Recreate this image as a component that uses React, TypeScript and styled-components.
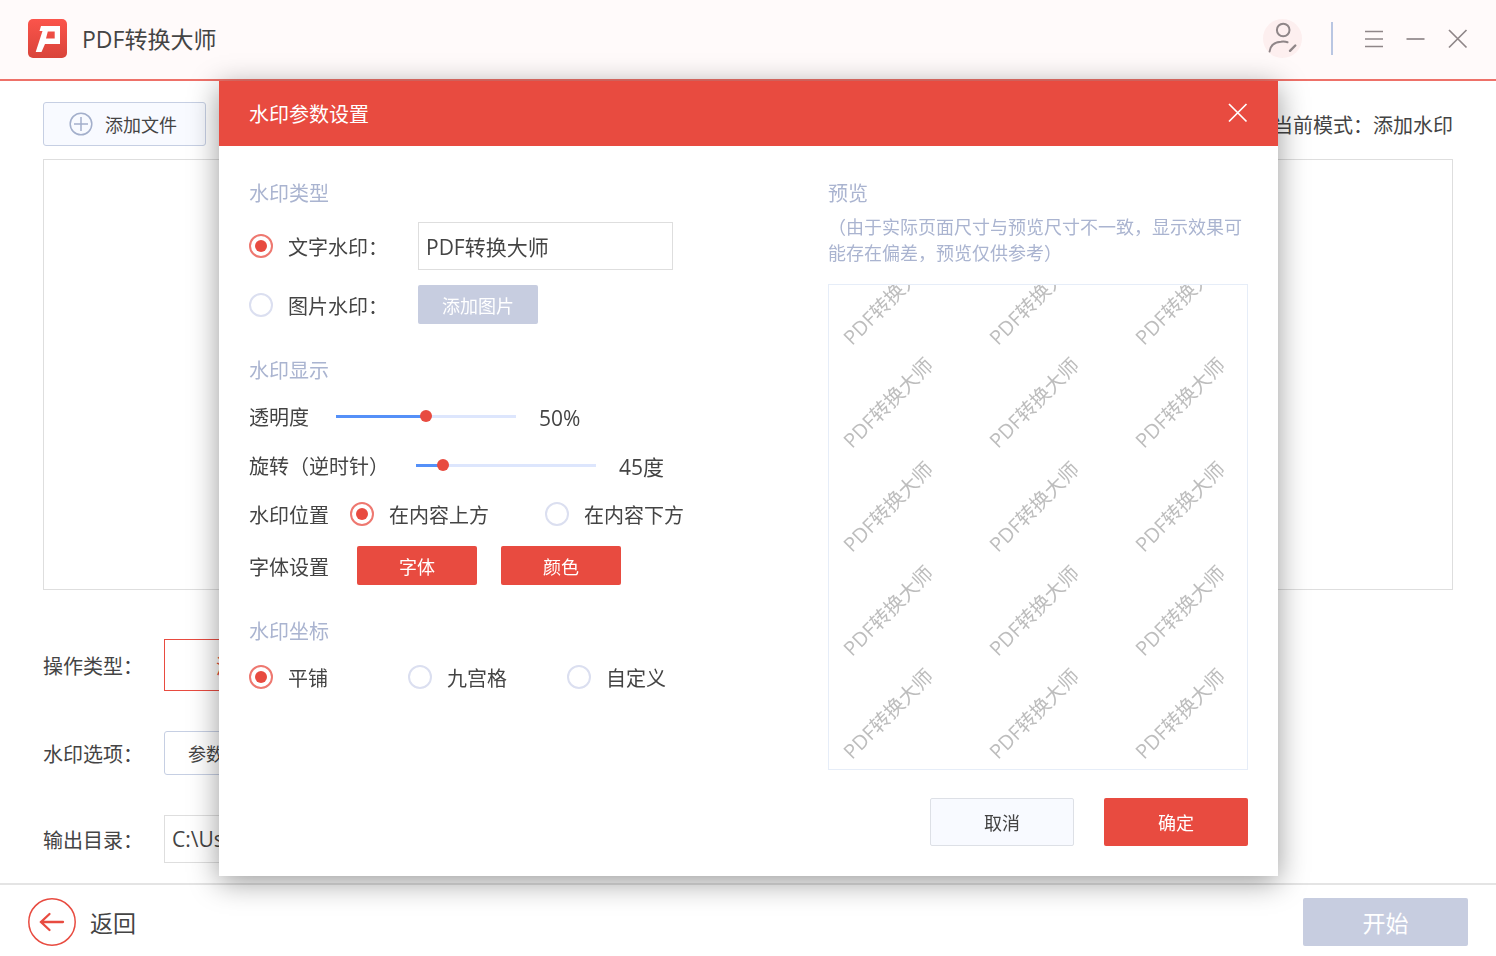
import React, { useState } from 'react';
import styled, { createGlobalStyle, css } from 'styled-components';

const red = '#e84b40';
const muted = '#aab4d0';

const GlobalStyle = createGlobalStyle`
  *, *::before, *::after { box-sizing: border-box; }
  body { margin: 0; background: #fff; }
  body, button, input {
    font-family: 'Open Sans', 'Noto Sans CJK SC', sans-serif;
    color: #444;
  }
  body { font-size: 20px; line-height: 30px; }
`;

const Page = styled.div`
  min-height: 100vh;
  display: flex;
  flex-direction: column;
`;

const TitleBar = styled.header`
  display: flex;
  align-items: center;
  justify-content: space-between;
  height: 81px;
  padding: 0 28px 2px;
  background: #fffafa;
  border-bottom: 2px solid #ee7169;
`;

const Brand = styled.div`
  display: flex;
  align-items: center;
  gap: 15px;
  font-size: 23px;
`;

const WindowControls = styled.div`
  display: flex;
  align-items: center;
`;

const IconButton = styled.button`
  display: flex;
  padding: 0;
  border: 0;
  background: none;
  cursor: pointer;
`;

const Divider = styled.span`
  width: 2px;
  height: 33px;
  margin: 0 31px 0 29px;
  background: #b9c6e2;
`;

const WindowButtons = styled.div`
  display: flex;
  gap: 22px;
`;

const Main = styled.main`
  flex: 1;
  display: flex;
  flex-direction: column;
  padding: 21px 43px 20px;
`;

const Toolbar = styled.div`
  display: flex;
  align-items: center;
  justify-content: space-between;
  margin-bottom: 13px;
`;

const OutlineButton = styled.button<{ $tinted?: boolean }>`
  display: flex;
  align-items: center;
  gap: 12px;
  height: 44px;
  padding: ${(p) => (p.$tinted ? '0 28px 0 25px' : '0 23px')};
  border: 1px solid #c6cfe3;
  border-radius: 3px;
  background: ${(p) => (p.$tinted ? '#f8faff' : '#fff')};
  font-size: 18px;
`;

const FileList = styled.section`
  flex: 1;
  min-height: 200px;
  margin-bottom: 49px;
  border: 1px solid #dedede;
`;

const OptionRows = styled.div`
  display: flex;
  flex-direction: column;
  gap: 40px;
`;

const OptionRow = styled.div`
  display: flex;
  align-items: center;
`;

const Caption = styled.span`
  padding-top: 4px;
`;

const OptionLabel = styled.label`
  width: 121px;
  padding-top: 4px;
`;

const TypeButton = styled.button`
  width: 184px;
  height: 52px;
  border: 1px solid ${red};
  background: #fff;
  color: ${red};
  font-size: 20px;
`;

const TextInput = styled.input<{ $width: number }>`
  width: ${(p) => p.$width}px;
  height: 48px;
  padding: 0 7px;
  border: 1px solid #dedede;
  background: #fff;
  font-size: 21px;
`;

const Footer = styled.footer`
  display: flex;
  align-items: center;
  justify-content: space-between;
  height: 73px;
  padding: 3px 28px 0;
  border-top: 2px solid #e4e4e4;
`;

const BackButton = styled.button`
  display: flex;
  align-items: center;
  gap: 14px;
  padding: 0;
  border: 0;
  background: none;
  font-size: 23px;
`;

type Tone = 'red' | 'grey' | 'plain';

const toneStyles = {
  red: css`
    background: ${red};
    color: #fff;
  `,
  grey: css`
    background: #c7cde0;
    color: #fff;
  `,
  plain: css`
    border: 1px solid #dde0e6;
    background: #f8faff;
  `,
};

const Button = styled.button<{ $tone: Tone; $size?: 'small' | 'medium' | 'large' }>`
  width: ${(p) => ({ small: 120, medium: 144, large: 165 })[p.$size ?? 'small']}px;
  height: ${(p) => (p.$size === 'medium' || p.$size === 'large' ? 48 : 39)}px;
  padding: 0;
  border: 0;
  border-radius: 2px;
  font-size: ${(p) => (p.$size === 'large' ? 23 : 18)}px;
  ${(p) => toneStyles[p.$tone]}
`;

const Overlay = styled.div`
  position: fixed;
  inset: 0;
  display: flex;
  align-items: center;
  justify-content: center;
  padding: 1px 0 0 1px;
`;

const Dialog = styled.div`
  width: 100%;
  max-width: 1059px;
  background: #fff;
  box-shadow: 0 6px 28px rgba(0, 0, 0, 0.4);
`;

const DialogHeader = styled.div`
  display: flex;
  align-items: center;
  justify-content: space-between;
  height: 65px;
  padding: 0 30px 2px;
  background: ${red};
  color: #fff;
`;

const DialogTitle = styled.h2`
  margin: 0;
  padding-top: 4px;
  font-size: 20px;
  font-weight: 400;
`;

const DialogBody = styled.div`
  display: flex;
  justify-content: space-between;
  padding: 33px 30px 30px;
`;

const Settings = styled.div`
  display: flex;
  flex-direction: column;
  gap: 32px;
`;

const SectionTitle = styled.h3<{ $gap?: number }>`
  margin: 0 0 ${(p) => p.$gap ?? 0}px;
  color: ${muted};
  font-size: 20px;
  font-weight: 400;
`;

const SettingRow = styled.div<{ $gap?: number }>`
  display: flex;
  align-items: center;
  gap: ${(p) => p.$gap ?? 0}px;
`;

const SettingList = styled.div`
  display: flex;
  flex-direction: column;
  gap: 15px;
`;

const ButtonPair = styled.div<{ $gap: number }>`
  display: flex;
  justify-content: flex-end;
  gap: ${(p) => p.$gap}px;
`;

const RadioLabel = styled.label<{ $width: number }>`
  display: flex;
  align-items: center;
  gap: 15px;
  width: ${(p) => p.$width}px;
`;

const Radio = styled.input.attrs({ type: 'radio' })`
  appearance: none;
  flex: none;
  width: 24px;
  height: 24px;
  margin: 0;
  padding: 4px;
  border: 2px solid #dbdff0;
  border-radius: 50%;
  background: #fff;

  &:checked {
    border-color: #ee7870;
    background: ${red} content-box;
  }
`;

const RangeInput = styled.input.attrs({ type: 'range' })`
  --fill: calc(6px + var(--ratio) * (100% - 12px));
  appearance: none;
  width: 180px;
  height: 12px;
  margin: 0;
  background: linear-gradient(to right, #5590f8 var(--fill), #dde6fd var(--fill)) center / 100% 3px no-repeat;

  &::-webkit-slider-thumb {
    appearance: none;
    width: 12px;
    height: 12px;
    border-radius: 50%;
    background: ${red};
  }
`;

const RangeLabel = styled.label`
  padding-top: 4px;
`;

const RangeValue = styled.output`
  margin-left: -4px;
  padding-top: 4px;
  font-size: 21px;
`;

const PreviewPane = styled.div`
  width: 420px;
`;

const Hint = styled.p`
  margin: 5px 0 18px;
  color: ${muted};
  font-size: 18px;
  line-height: 26px;
`;

const PreviewSheet = styled.div`
  height: 486px;
  margin-bottom: 28px;
  border: 1px solid #e6edf8;
  overflow: hidden;
`;

const WatermarkGrid = styled.div`
  display: grid;
  grid-template-columns: repeat(3, 146px);
  grid-template-rows: repeat(5, 1fr);
  height: 518px;
  margin: -37px 0 0 -14px;
`;

const Watermark = styled.span`
  place-self: center;
  color: #bdbdbd;
  white-space: nowrap;
  transform: rotate(-45deg);
`;

const Logo = () => (
  <svg width="39" height="39" viewBox="0 0 39 39" aria-hidden="true">
    <defs>
      <linearGradient id="logo-fill" x1="0" y1="0" x2="0" y2="1">
        <stop offset="0" stopColor="#fb544b" />
        <stop offset="1" stopColor="#d9443a" />
      </linearGradient>
    </defs>
    <rect width="39" height="39" rx="5" fill="url(#logo-fill)" />
    <path
      fill="#fff"
      fillRule="evenodd"
      d="M13 7H32V25H17L13.500 33H7.700L14.500 12H11.500ZM19.800 12.500L18 19.500H26.700V12.500Z"
    />
  </svg>
);

const UserIcon = () => (
  <svg width="39" height="39" viewBox="0 0 39 39" fill="none" stroke="#8f8688" strokeWidth="2" strokeLinecap="round">
    <circle cx="19.500" cy="19.500" r="19.500" fill="#fdefef" stroke="none" />
    <circle cx="20.200" cy="11" r="6.300" />
    <path d="M6.600 32.500C7.400 26 11.500 23 18 22.700Q22 22.300 24.500 23.300" />
    <path d="M27 31.800L32.300 26.500" strokeWidth="2.400" />
  </svg>
);

const CloseIcon = ({ color }: { color: string }) => (
  <svg width="20" height="20" viewBox="0 0 20 20" stroke={color} strokeWidth="1.700">
    <path d="M1 1L18.500 18.500M18.500 1L1 18.500" />
  </svg>
);

interface RangeProps {
  label: string;
  id: string;
  max: number;
  value: number;
  unit: string;
  onChange: (value: number) => void;
}

const RangeRow = ({ label, id, max, value, unit, onChange }: RangeProps) => (
  <SettingRow $gap={27}>
    <RangeLabel htmlFor={id}>{label}</RangeLabel>
    <RangeInput
      id={id}
      min={0}
      max={max}
      value={value}
      onChange={(e) => onChange(Number(e.target.value))}
      style={{ '--ratio': value / max } as React.CSSProperties}
    />
    <RangeValue htmlFor={id}>{`${value}${unit}`}</RangeValue>
  </SettingRow>
);

export default function App() {
  const [text, setText] = useState('PDF转换大师');
  const [kind, setKind] = useState('text');
  const [opacity, setOpacity] = useState(50);
  const [angle, setAngle] = useState(45);
  const [layer, setLayer] = useState('在内容上方');
  const [placement, setPlacement] = useState('平铺');

  return (
    <>
      <GlobalStyle />
      <Page lang="zh-CN">
        <TitleBar>
          <Brand>
            <Logo />
            <span>PDF转换大师</span>
          </Brand>
          <WindowControls>
            <IconButton aria-label="用户">
              <UserIcon />
            </IconButton>
            <Divider />
            <WindowButtons>
              <IconButton aria-label="菜单">
                <svg width="20" height="20" viewBox="0 0 20 20" stroke="#8f8688" strokeWidth="1.700">
                  <path d="M1 2.500H19M1 10H19M1 17.500H19" />
                </svg>
              </IconButton>
              <IconButton aria-label="最小化">
                <svg width="20" height="20" viewBox="0 0 20 20" stroke="#8f8688" strokeWidth="1.700">
                  <path d="M0.500 10H18.500" />
                </svg>
              </IconButton>
              <IconButton aria-label="关闭">
                <CloseIcon color="#8f8688" />
              </IconButton>
            </WindowButtons>
          </WindowControls>
        </TitleBar>

        <Main>
          <Toolbar>
            <OutlineButton $tinted>
              <svg width="24" height="24" viewBox="0 0 24 24" fill="none" stroke="#a3afcb" strokeWidth="1.500">
                <circle cx="12" cy="12" r="10.800" />
                <path d="M12 5V19M5 12H19" />
              </svg>
              添加文件
            </OutlineButton>
            <Caption>当前模式：添加水印</Caption>
          </Toolbar>
          <FileList />
          <OptionRows>
            <OptionRow>
              <OptionLabel htmlFor="action">操作类型：</OptionLabel>
              <TypeButton id="action">添加水印</TypeButton>
            </OptionRow>
            <OptionRow>
              <OptionLabel htmlFor="params">水印选项：</OptionLabel>
              <OutlineButton id="params">参数设置</OutlineButton>
            </OptionRow>
            <OptionRow>
              <OptionLabel htmlFor="output">输出目录：</OptionLabel>
              <TextInput id="output" $width={600} defaultValue="C:\Users" />
            </OptionRow>
          </OptionRows>
        </Main>

        <Footer>
          <BackButton>
            <svg width="48" height="48" viewBox="0 0 48 48" fill="none" stroke={red} strokeLinecap="round">
              <circle cx="24" cy="24" r="23.200" strokeWidth="1.500" />
              <path d="M35 24H13M21.500 16L13 24L21.500 32" strokeWidth="2.300" />
            </svg>
            返回
          </BackButton>
          <Button $tone="grey" $size="large">
            开始
          </Button>
        </Footer>
      </Page>

      <Overlay lang="zh-CN">
        <Dialog role="dialog" aria-labelledby="dialog-title">
          <DialogHeader>
            <DialogTitle id="dialog-title">水印参数设置</DialogTitle>
            <IconButton aria-label="关闭">
              <CloseIcon color="#fff" />
            </IconButton>
          </DialogHeader>
          <DialogBody>
            <Settings>
              <section>
                <SectionTitle $gap={13}>水印类型</SectionTitle>
                <SettingList>
                  <SettingRow>
                    <RadioLabel $width={169}>
                      <Radio name="kind" checked={kind === 'text'} onChange={() => setKind('text')} />
                      <Caption>文字水印：</Caption>
                    </RadioLabel>
                    <TextInput
                      aria-label="文字水印"
                      $width={255}
                      value={text}
                      onChange={(e) => setText(e.target.value)}
                    />
                  </SettingRow>
                  <SettingRow>
                    <RadioLabel $width={169}>
                      <Radio name="kind" checked={kind === 'image'} onChange={() => setKind('image')} />
                      <Caption>图片水印：</Caption>
                    </RadioLabel>
                    <Button $tone="grey">添加图片</Button>
                  </SettingRow>
                </SettingList>
              </section>

              <section>
                <SectionTitle $gap={13}>水印显示</SectionTitle>
                <SettingList>
                  <RangeRow label="透明度" id="opacity" max={100} value={opacity} unit="%" onChange={setOpacity} />
                  <RangeRow label="旋转（逆时针）" id="angle" max={360} value={angle} unit="度" onChange={setAngle} />
                  <SettingRow $gap={21}>
                    <Caption>水印位置</Caption>
                    {['在内容上方', '在内容下方'].map((name) => (
                      <RadioLabel key={name} $width={174}>
                        <Radio name="layer" checked={layer === name} onChange={() => setLayer(name)} />
                        <Caption>{name}</Caption>
                      </RadioLabel>
                    ))}
                  </SettingRow>
                  <SettingRow $gap={28}>
                    <Caption>字体设置</Caption>
                    <ButtonPair $gap={24}>
                      <Button $tone="red">字体</Button>
                      <Button $tone="red">颜色</Button>
                    </ButtonPair>
                  </SettingRow>
                </SettingList>
              </section>

              <section>
                <SectionTitle $gap={13}>水印坐标</SectionTitle>
                <SettingRow>
                  {['平铺', '九宫格', '自定义'].map((name) => (
                    <RadioLabel key={name} $width={159}>
                      <Radio name="placement" checked={placement === name} onChange={() => setPlacement(name)} />
                      <Caption>{name}</Caption>
                    </RadioLabel>
                  ))}
                </SettingRow>
              </section>
            </Settings>

            <PreviewPane>
              <SectionTitle>预览</SectionTitle>
              <Hint>（由于实际页面尺寸与预览尺寸不一致，显示效果可能存在偏差，预览仅供参考）</Hint>
              <PreviewSheet>
                <WatermarkGrid>
                  {Array.from({ length: 15 }, (_, i) => (
                    <Watermark key={i}>{text}</Watermark>
                  ))}
                </WatermarkGrid>
              </PreviewSheet>
              <ButtonPair $gap={30}>
                <Button $tone="plain" $size="medium">
                  取消
                </Button>
                <Button $tone="red" $size="medium">
                  确定
                </Button>
              </ButtonPair>
            </PreviewPane>
          </DialogBody>
        </Dialog>
      </Overlay>
    </>
  );
}
